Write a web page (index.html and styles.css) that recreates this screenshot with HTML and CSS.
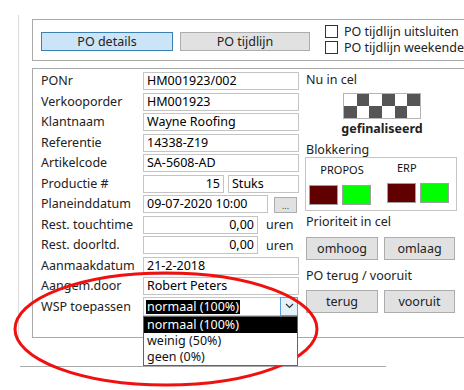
FILE: index.html
```html
<!DOCTYPE html>
<html>
  <head>
    <title>PO details</title>

    <link rel="stylesheet" href="styles.css">
  </head>
  <body>
    <div class="frame">
      <div class="tabbar">
        <button class="tab active" type="button">PO details</button>
        <button class="tab" type="button">PO tijdlijn</button>
        <div class="checks">
          <label class="check"><span class="box"></span>PO tijdlijn uitsluiten</label>
          <label class="check"><span class="box"></span>PO tijdlijn weekenden</label>
        </div>
      </div>

      <div class="details">
        <div class="fields">
          <div class="lbl">PONr</div>
          <div class="val"><div class="fld wide">HM001923/002</div></div>
          <div class="lbl">Verkooporder</div>
          <div class="val"><div class="fld wide">HM001923</div></div>
          <div class="lbl">Klantnaam</div>
          <div class="val"><div class="fld wide">Wayne Roofing</div></div>
          <div class="lbl">Referentie</div>
          <div class="val"><div class="fld wide">14338-Z19</div></div>
          <div class="lbl">Artikelcode</div>
          <div class="val"><div class="fld wide">SA-5608-AD</div></div>
          <div class="lbl">Productie #</div>
          <div class="val"><div class="fld num qty">15</div><div class="fld unit">Stuks</div></div>
          <div class="lbl">Planeinddatum</div>
          <div class="val"><div class="fld date">09-07-2020 10:00</div><button class="dots" type="button">...</button></div>
          <div class="lbl">Rest. touchtime</div>
          <div class="val"><div class="fld num hours">0,00</div><span class="uren">uren</span></div>
          <div class="lbl">Rest. doorltd.</div>
          <div class="val"><div class="fld num hours">0,00</div><span class="uren">uren</span></div>
          <div class="lbl">Aanmaakdatum</div>
          <div class="val"><div class="fld wide">21-2-2018</div></div>
          <div class="lbl">Aangem.door</div>
          <div class="val"><div class="fld wide">Robert Peters</div></div>
          <div class="lbl">WSP toepassen</div>
          <div class="val">
            <div class="select">
              <span class="sel-text">normaal (100%)</span>
              <span class="sel-arrow">
                <svg width="9" height="6" viewBox="0 0 9 6"><polyline points="1,1 4.5,4.5 8,1" fill="none" stroke="#333" stroke-width="1.2"/></svg>
              </span>
              <div class="drop">
                <div class="opt on">normaal (100%)</div>
                <div class="opt">weinig (50%)</div>
                <div class="opt">geen (0%)</div>
              </div>
            </div>
          </div>
        </div>

        <div class="side">
          <div class="cap">Nu in cel</div>
          <div class="checker">
            <span></span><span class="d"></span><span></span><span class="d"></span><span></span><span class="d"></span>
            <span class="d"></span><span></span><span class="d"></span><span></span><span class="d"></span><span></span>
          </div>
          <div class="state">gefinaliseerd</div>

          <div class="cap blk">Blokkering</div>
          <div class="block">
            <div class="grp">
              <div class="grp-name">PROPOS</div>
              <div class="lamps"><span class="lamp red"></span><span class="lamp green"></span></div>
            </div>
            <div class="grp">
              <div class="grp-name erp">ERP</div>
              <div class="lamps"><span class="lamp red"></span><span class="lamp green"></span></div>
            </div>
          </div>

          <div class="cap prio">Prioriteit in cel</div>
          <div class="btns">
            <button class="btn" type="button">omhoog</button>
            <button class="btn" type="button">omlaag</button>
          </div>

          <div class="cap back">PO terug / vooruit</div>
          <div class="btns back">
            <button class="btn" type="button">terug</button>
            <button class="btn" type="button">vooruit</button>
          </div>
        </div>
      </div>
    </div>
    <div class="rule"></div>

    <svg class="mark" width="464" height="390">
      <ellipse cx="166" cy="329" rx="151" ry="56" fill="none" stroke="#f01010" stroke-width="3"/>
    </svg>
  </body>
</html>
```

FILE: styles.css
```css
body { margin: 0; width: 464px; height: 390px; overflow: hidden; position: relative; background: #fff; font-family: "Noto Sans", sans-serif; font-size: 12.5px; color: #222; }

.frame { margin: 15px 0 0 18px; height: 321px; padding: 4px 0 0 13px; border-left: 1px solid #dcdcdc; }

/* top bar with tabs */
.tabbar { display: flex; align-items: flex-start; width: 460px; height: 40px; padding-left: 8px; border: 1px solid #a9a9a9; border-right: none; overflow: hidden; }
.tab { width: 130px; height: 19px; margin: 12px 0 0 7px; padding: 0; box-sizing: border-box; background: #e1e1e1; border: 1px solid #adadad; font: inherit; color: #222; line-height: 17px; }
.tab.active { width: 132px; margin-left: 0; background: #cce4f7; border-color: #3c7fb1; }
.checks { display: flex; flex-direction: column; margin: 3px 0 0 15px; }
.check { display: flex; align-items: center; height: 16px; white-space: nowrap; }
.box { width: 13px; height: 13px; margin-right: 6px; box-sizing: border-box; border: 1px solid #333; background: #fff; }

/* details panel */
.details { display: flex; width: 460px; height: 265px; margin-top: 7px; padding: 3px 0 0 8px; border: 1px solid #a9a9a9; border-right: none; }

.fields { display: grid; grid-template-columns: 102px 156px; grid-auto-rows: 18px; row-gap: 2.5px; align-content: start; }
.lbl { line-height: 18px; white-space: nowrap; }
.val { display: flex; align-items: center; }
.fld { height: 18px; padding: 0 3px; box-sizing: border-box; border: 1px solid #c4c4c4; line-height: 16px; white-space: nowrap; overflow: hidden; color: #000; }
.fld.num { text-align: right; }
.wide { width: 156px; }
.qty { width: 81px; }
.unit { width: 71px; margin-left: 4px; }
.date { width: 125px; }
.hours { width: 115px; }
.uren { margin-left: 8px; }
.dots { align-self: flex-end; width: 23px; height: 16px; margin-left: 6px; padding: 0; background: #e1e1e1; border: 1px solid #adadad; font: inherit; font-size: 9px; line-height: 16px; color: #444; }

.select { position: relative; display: flex; align-items: center; width: 155px; height: 19px; box-sizing: border-box; border: 1px solid #c4c4c4; }
.sel-text { margin-left: 2px; padding: 0 1px; background: #000; color: #fff; line-height: 14px; }
.sel-arrow { display: flex; align-items: center; justify-content: center; width: 18px; height: 19px; margin: -1px -1px 0 auto; box-sizing: border-box; border: 1px solid #569de5; background: #e5f1fb; }
.drop { position: absolute; left: -1px; top: 18px; z-index: 2; width: 155px; box-sizing: border-box; border: 1px solid #646464; background: #fff; }
.opt { padding-left: 3px; line-height: 16px; color: #111; }
.opt.on { background: #000; color: #fff; }

/* right column */
.side { display: flex; flex-direction: column; align-items: flex-start; width: 152px; margin-left: 7px; }
.cap { line-height: 16px; white-space: nowrap; }
.checker { display: grid; grid-template-columns: repeat(6, 1fr); grid-auto-rows: 12px; width: 78px; margin: 5px 0 0 37px; box-sizing: border-box; border: 1px solid #b4b4b4; }
.checker .d { background: #555; }
.state { width: 100px; margin: 2px 0 0 26px; font-weight: bold; line-height: 16px; text-align: center; }

.cap.blk { margin-top: 5px; }
.block { display: flex; width: 152px; height: 54px; margin: -1px 0 0 -1px; padding: 5px 0 0 3px; box-sizing: border-box; border: 1px solid #c4c4c4; }
.grp + .grp { margin-left: 16px; }
.grp-name { padding-left: 4px; font-size: 11px; line-height: 14px; text-align: center; color: #111; }
.grp-name.erp { padding-left: 10px; text-align: left; margin-top: -2px; margin-bottom: 2px; }
.lamps { display: flex; gap: 4px; margin-top: 8px; }
.lamp { width: 29px; height: 20px; box-sizing: border-box; border: 1px solid #a0a0a0; }
.red { background: #600000; }
.green { background: #00ff00; }

.cap.prio { margin-top: 3px; }
.btns { display: flex; gap: 6px; margin-top: 7px; }
.btn { width: 72px; height: 23px; padding: 0; background: #e1e1e1; border: 1px solid #adadad; font: inherit; color: #222; }
.btn + .btn { width: 71px; }
.cap.back { margin-top: 8px; }
.btns.back { margin-top: 6px; }

.rule { width: 366px; margin: 26px 0 0 20px; border-top: 1px solid #a9a9a9; }

.mark { position: absolute; left: 0; top: 0; pointer-events: none; }
```
